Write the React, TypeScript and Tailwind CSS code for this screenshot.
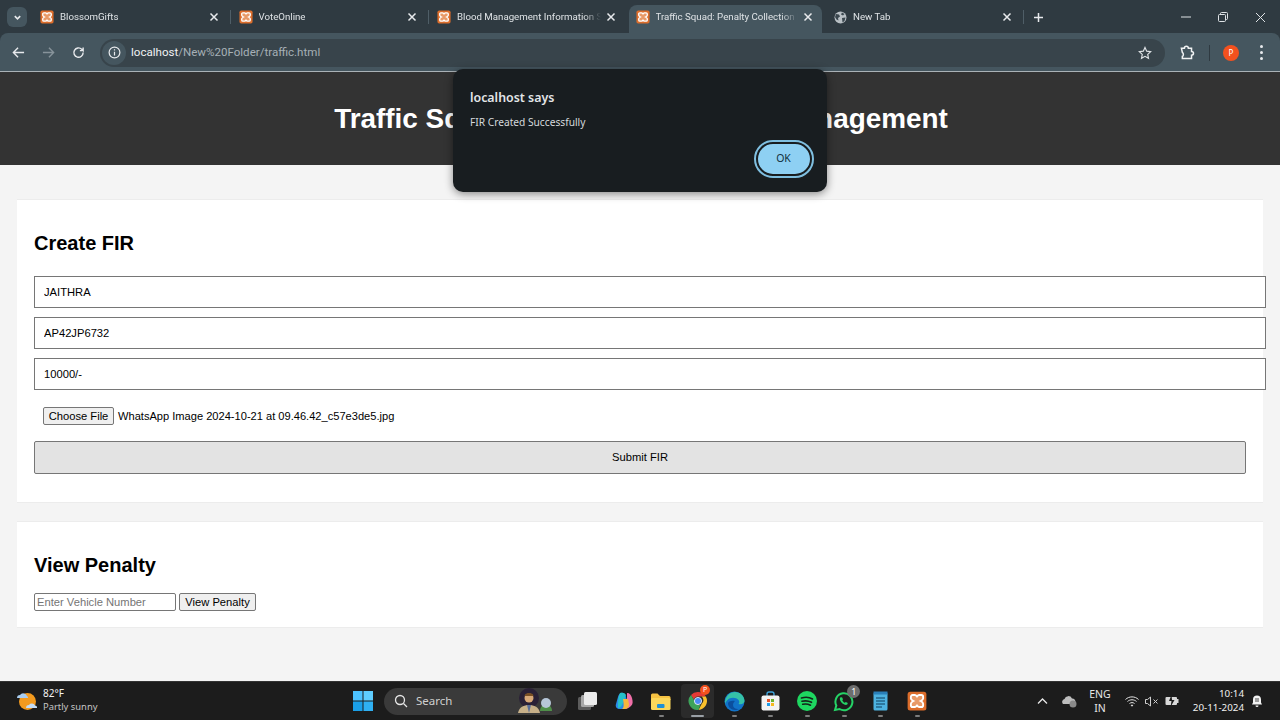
import { ReactNode } from "react"

function XamppIcon({ size = 14 }: { size?: number }) {
  return (
    <svg width={size} height={size} viewBox="0 0 16 16" className="shrink-0">
      <rect x="0.5" y="0.5" width="15" height="15" rx="2" fill="#dc6d2b" />
      <path
        d="M4.5 3.2h1.8c.8 0 1.2.5 1.7 1.2.5-.7.9-1.2 1.7-1.2h1.8c.9 0 1.4.7 1.4 1.5v1.2c0 .9-.8 1.5-2 2.1 1.2.6 2 1.2 2 2.1v1.2c0 .8-.5 1.5-1.4 1.5H9.7c-.8 0-1.2-.5-1.7-1.2-.5.7-.9 1.2-1.7 1.2H4.500c-.9 0-1.400-.7-1.400-1.500v-1.200c0-.9.800-1.500 2-2.100-1.200-.6-2-1.200-2-2.100V4.700c0-.8.500-1.500 1.400-1.500z"
        fill="#e89a68"
        stroke="#fff"
        strokeWidth="1.5"
      />
    </svg>
  )
}

function CloseIcon() {
  return (
    <svg width="10" height="10" viewBox="0 0 10 10" className="shrink-0" stroke="#e8eaed" strokeWidth="1.5" fill="none">
      <path d="M1.500 1.500l7 7M8.500 1.500l-7 7" />
    </svg>
  )
}

function GlobeIcon() {
  return (
    <svg width="13" height="13" viewBox="0 0 13 13" className="shrink-0">
      <circle cx="6.5" cy="6.5" r="6" fill="#b9c0c5" />
      <path d="M2 3l3 .5 1 2-2 1.500.5 2.500L2.500 8.500 1 6zM8 1.500l2.500 1.500-1.500 1.500-2-1zM8 7l3.500-.5-1 3.500-2 1.500z" fill="#3b474f" />
    </svg>
  )
}

function TabTitle({ title }: { title: string }) {
  return (
    <span className="ml-[6px] pt-px flex-1 min-w-0 overflow-hidden whitespace-nowrap text-[9.7px] text-[#dfe3e6] font-['Roboto',sans-serif] [mask-image:linear-gradient(to_right,black_88%,transparent)]">
      {title}
    </span>
  )
}

function Tab({ title, separator }: { title: string; separator?: boolean }) {
  return (
    <div className="flex items-center w-[198.5px] h-[28px] pl-[8px]">
      <XamppIcon />
      <TabTitle title={title} />
      <span className="ml-[5px] mr-[11px]">
        <CloseIcon />
      </span>
      <span className={separator ? "w-px h-[14px] bg-[#4f5e67]" : "w-px h-[14px]"} />
    </div>
  )
}

function TaskIcon({ children, dash, active }: { children: ReactNode; dash?: boolean; active?: boolean }) {
  return (
    <div
      className={
        active
          ? "relative flex items-center justify-center w-[33px] h-[34px] mx-[1.8px] rounded-[4px] bg-[#2b2b2b]"
          : "relative flex items-center justify-center w-[36.6px] h-[34px]"
      }
    >
      {children}
      {dash && (
        <span
          className={
            active
              ? "absolute bottom-[1px] left-[10px] w-[13px] h-[2px] rounded-full bg-[#9aa0a6]"
              : "absolute bottom-[1px] left-[16px] w-[5px] h-[2px] rounded-full bg-[#7d7d7d]"
          }
        />
      )}
    </div>
  )
}

const inputClass =
  "block box-content w-full h-[30px] px-[9px] mb-[9px] border border-[#767676] bg-white text-[11.2px] text-black font-['Liberation_Sans',sans-serif] leading-[30px]"

export default function App() {
  return (
    <div className="relative flex flex-col w-[1280px] h-[720px] overflow-hidden bg-[#f4f4f4] font-['Liberation_Sans',sans-serif]">
      <div className="shrink-0 bg-[#2f3a41]">
        {/* Browser tab strip */}
        <div className="flex items-start h-[33px]">
          <div className="flex items-center justify-center w-[20px] h-[20px] mt-[7px] ml-[7px] mr-[5px] rounded-[6px] bg-[#45565f]">
            <svg width="9" height="9" viewBox="0 0 10 10" fill="none" stroke="#e8eaed" strokeWidth="1.8">
              <path d="M2 3.500l3 3 3-3" />
            </svg>
          </div>
          <div className="flex items-start pt-[3px]">
            <Tab title="BlossomGifts" separator />
            <Tab title="VoteOnline" separator />
            <Tab title="Blood Management Information System" />
          </div>
          <div className="flex items-center w-[193px] h-[28px] mt-[5px] ml-[1.5px] pl-[6.5px] pr-[9px] pb-[4px] rounded-t-[8px] bg-[#45565f]">
            <XamppIcon />
            <TabTitle title="Traffic Squad: Penalty Collection Management" />
            <span className="ml-[5px]">
              <CloseIcon />
            </span>
          </div>
          <div className="flex items-center w-[202px] h-[28px] mt-[3px] pl-[12px]">
            <GlobeIcon />
            <TabTitle title="New Tab" />
            <span className="mr-[11px]">
              <CloseIcon />
            </span>
            <span className="w-px h-[14px] bg-[#4f5e67]" />
          </div>
          <div className="flex items-center h-[28px] mt-[3px] ml-[9px]">
            <svg width="11" height="11" viewBox="0 0 11 11" stroke="#e8eaed" strokeWidth="1.5">
              <path d="M5.500 1v9M1 5.500h9" />
            </svg>
          </div>
          <div className="flex-1" />
          <div className="flex items-center h-[28px] mt-[3px] pr-[14px] gap-[27px]">
            <svg width="10" height="10" viewBox="0 0 10 10" stroke="#dfe3e6" strokeWidth="1">
              <path d="M0 5h10" />
            </svg>
            <svg width="10" height="10" viewBox="0 0 10 10" fill="none" stroke="#dfe3e6" strokeWidth="1">
              <rect x="0.5" y="2.5" width="7" height="7" rx="1" />
              <path d="M2.500 2.500V1.500a1 1 0 0 1 1-1h5a1 1 0 0 1 1 1v5a1 1 0 0 1-1 1h-1" />
            </svg>
            <svg width="11" height="11" viewBox="0 0 11 11" stroke="#dfe3e6" strokeWidth="1">
              <path d="M1 1l9 9M10 1l-9 9" />
            </svg>
          </div>
        </div>

        {/* Toolbar */}
        <div className="flex items-center h-[39px] pt-px rounded-t-[8px] bg-[#45565f] border-b border-[#aab2b7]">
          <div className="flex items-center w-[100px] pl-[12px] gap-[17px]">
            <svg width="13" height="13" viewBox="0 0 14 14" fill="none" stroke="#e8eaed" strokeWidth="1.5">
              <path d="M13 7H1.500M6.500 2l-5 5 5 5" />
            </svg>
            <svg width="13" height="13" viewBox="0 0 14 14" fill="none" stroke="#87939a" strokeWidth="1.5">
              <path d="M1 7h11.500M7.500 2l5 5-5 5" />
            </svg>
            <svg width="13" height="13" viewBox="0 0 14 14" fill="none" stroke="#e8eaed" strokeWidth="1.5">
              <path d="M12 7a5 5 0 1 1-1.500-3.500L12 5V1.500M12 5H8.500" />
            </svg>
          </div>
          <div className="flex items-center w-[1065px] h-[28px] rounded-full bg-[#38444b]">
            <span className="flex items-center justify-center w-[24px] h-[24px] ml-[2px] rounded-full bg-[#45565f]">
              <svg width="13" height="13" viewBox="0 0 14 14" fill="none" stroke="#e8eaed" strokeWidth="1.3">
                <circle cx="7" cy="7" r="5.8" />
                <path d="M7 6.200v4M7 3.600v1.300" />
              </svg>
            </span>
            <span className="ml-[5px] pt-px text-[11.55px] text-[#f1f3f4] font-['Roboto',sans-serif]">
              localhost<span className="text-[#a6b0b6]">/New%20Folder/traffic.html</span>
            </span>
            <span className="flex-1" />
            <svg width="14" height="14" viewBox="0 0 24 24" fill="none" stroke="#dfe3e6" strokeWidth="2" className="mr-[13px]">
              <path d="M12 2.500l2.900 6.300 6.800.8-5 4.700 1.300 6.800-6-3.400-6 3.400 1.300-6.800-5-4.700 6.800-.8z" />
            </svg>
          </div>
          <svg width="15" height="15" viewBox="0 0 16 16" fill="none" stroke="#f1f3f4" strokeWidth="1.6" className="ml-[15px]">
            <path d="M1.500 3.500h3.200c0-3 4.200-3 4.200 0h3.400v3.400c2.800 0 2.800 4 0 4v3.600H2.500v-2.300c1.500-.4 1.500-3.700 0-4.200z" />
          </svg>
          <div className="w-px h-[16px] ml-[14px] bg-[#2f3a41]" />
          <div className="flex items-center justify-center w-[16px] h-[16px] ml-[13px] rounded-full bg-[#f4511e] text-[8px] text-white font-['Noto_Sans',sans-serif]">
            P
          </div>
          <div className="flex flex-col gap-[3px] ml-[21px]">
            <span className="w-[3px] h-[3px] rounded-full bg-[#e8eaed]" />
            <span className="w-[3px] h-[3px] rounded-full bg-[#e8eaed]" />
            <span className="w-[3px] h-[3px] rounded-full bg-[#e8eaed]" />
          </div>
        </div>
      </div>

      {/* Page */}
      <div className="flex-1 min-h-0">
        <header className="flex items-center justify-center h-[93px] pt-px pl-[2px] bg-[#333333]">
          <h1 className="text-[27.9px] font-bold text-white">Traffic Squad: Penalty Collection Management</h1>
        </header>

        <main className="px-[17px] pt-[34px]">
          <section className="h-[304px] px-[17px] bg-white border-y border-[#ececec]">
            <h2 className="pt-[30px] h-[76px] text-[20px] leading-[26px] font-bold text-black">Create FIR</h2>
            <input readOnly value="JAITHRA" className={inputClass} />
            <input readOnly value="AP42JP6732" className={inputClass} />
            <input readOnly value="10000/-" className={inputClass} />
            <div className="flex items-center h-[18px] mt-[17px] ml-[9px]">
              <button className="h-[18px] w-[71px] border border-[#767676] rounded-[2px] bg-[#efefef] text-[11.2px] text-black">
                Choose File
              </button>
              <span className="ml-[4px] text-[11.1px] text-black">WhatsApp Image 2024-10-21 at 09.46.42_c57e3de5.jpg</span>
            </div>
            <button className="block w-full h-[33px] mt-[16px] border border-[#767676] rounded-[2px] bg-[#e3e3e3] text-[11.2px] text-black">
              Submit FIR
            </button>
          </section>

          <section className="h-[107px] mt-[18px] px-[17px] bg-white border-y border-[#ececec]">
            <h2 className="pt-[30px] h-[72px] text-[20px] leading-[26px] font-bold text-black">View Penalty</h2>
            <div className="flex items-center gap-[3px] mt-[-1px]">
              <input
                readOnly
                placeholder="Enter Vehicle Number"
                className="w-[142px] h-[18px] px-[2px] border border-[#767676] rounded-[2px] bg-white text-[11.2px] text-black placeholder:text-[#757575]"
              />
              <button className="w-[77px] h-[18px] border border-[#767676] rounded-[2px] bg-[#efefef] text-[11.2px] text-black">
                View Penalty
              </button>
            </div>
          </section>
        </main>
      </div>

      {/* Taskbar */}
      <div className="flex items-center h-[39px] shrink-0 bg-[#1c1c1c] border-t border-[#333333] text-white font-['Noto_Sans',sans-serif]">
        <div className="flex items-center w-[345px] pl-[16px] shrink-0">
          <svg width="22" height="22" viewBox="0 0 22 22">
            <circle cx="11.5" cy="11.5" r="8.5" fill="#f39a1e" />
            <path d="M1 8a3 3 0 0 1 3-3 4 4 0 0 1 7 1 2 2 0 0 1 1 2z" fill="#a9cdf0" />
            <path d="M10 18a3 3 0 0 1 3-3 3.500 3.500 0 0 1 6 .5 2 2 0 0 1 2 2.500z" fill="#c4dcf5" />
          </svg>
          <div className="ml-[5px] flex flex-col mt-[-2px]">
            <span className="text-[10px] leading-[13px] text-[#f2f2f2]">82°F</span>
            <span className="text-[9.4px] leading-[14px] text-[#c4c4c4]">Partly sunny</span>
          </div>
        </div>

        <div className="flex items-center w-[36px] justify-center shrink-0">
          <svg width="20" height="20" viewBox="0 0 20 20">
            <rect x="0" y="0" width="9.5" height="9.5" fill="#4cc2ff" />
            <rect x="10.5" y="0" width="9.5" height="9.5" fill="#5fcdff" />
            <rect x="0" y="10.5" width="9.5" height="9.5" fill="#1a9fe8" />
            <rect x="10.5" y="10.5" width="9.5" height="9.5" fill="#2fb0f2" />
          </svg>
        </div>

        <div className="flex items-center w-[183px] h-[27px] ml-[3px] pl-[10px] rounded-full bg-[#3a3a3a] shrink-0">
          <svg width="14" height="14" viewBox="0 0 14 14" fill="none" stroke="#e6e6e6" strokeWidth="1.3">
            <circle cx="6" cy="6" r="4.5" />
            <path d="M9.500 9.500L13 13" />
          </svg>
          <span className="ml-[8px] flex-1 text-[11.5px] text-[#cfcfcf]">Search</span>
          <svg width="42" height="26" viewBox="0 0 42 26" className="mr-[-2px]">
            <circle cx="14" cy="10" r="10" fill="#2a2036" />
            <path d="M3 25c1-6 6-8 11-8s10 2 11 8z" fill="#c7b089" />
            <path d="M12 17l2 8 2-8z" fill="#5a6d99" />
            <circle cx="14" cy="10" r="4.5" fill="#d9a878" />
            <path d="M9.500 8c0-4 9-4 9 0z" fill="#7a4f24" />
            <path d="M25 23c0-4 3-7 6-7s6 3 6 7z" fill="#4f8f4a" />
            <circle cx="31" cy="15" r="5" fill="#b6c6d8" />
          </svg>
          <span className="w-[12px]" />
        </div>

        <div className="flex items-center ml-[2.5px]">
          <TaskIcon>
            <svg width="21" height="20" viewBox="0 0 21 20">
              <rect x="1" y="6" width="13" height="13" rx="1.5" fill="#5c5c5c" />
              <rect x="4" y="4" width="13" height="12" rx="1.5" fill="#a8a8a8" />
              <rect x="7" y="1" width="13" height="13" rx="1.5" fill="#ececec" />
            </svg>
          </TaskIcon>
          <TaskIcon>
            <svg width="20" height="20" viewBox="0 0 20 20">
              <path d="M7 2c3-1 4 1 5 4l2 7c1 3-1 5-4 5H6C3 18 1 16 2 13l2-7c.5-2 1.500-3.500 3-4z" fill="#2a8be8" />
              <path d="M13 2c3 0 4 2 5 5 1 4 1 6-1 8-2 2-4 3-6 3l2-6z" fill="#f06fa8" />
              <path d="M6 2c3-.5 5 0 6 2L9 12c-1 3-3 5-5 5 0-4 0-11 2-15z" fill="#27c1c9" />
              <path d="M9 8h5l1 5c.5 3-2 5-5 5H8c2-1 2-4 1-10z" fill="#f6b73c" />
            </svg>
          </TaskIcon>
          <TaskIcon dash>
            <svg width="21" height="19" viewBox="0 0 21 19">
              <path d="M1 3a1.500 1.500 0 0 1 1.500-1.500h5L10 4h9a1.500 1.500 0 0 1 1.500 1.500V8H1z" fill="#f5c242" />
              <rect x="1" y="6" width="19.5" height="12" rx="1.5" fill="#fbd75b" />
              <rect x="7" y="12" width="7.5" height="4" rx="1" fill="#1f8fd6" />
            </svg>
          </TaskIcon>
          <TaskIcon dash active>
            <svg width="20" height="20" viewBox="0 0 20 20">
              <path d="M10 1a9 9 0 0 1 7.800 4.500H10a4.500 4.500 0 0 0-4.200 3L3 3.900A9 9 0 0 1 10 1z" fill="#e53935" />
              <path d="M17.800 5.500A9 9 0 0 1 10.500 19l3.400-6.500a4.500 4.500 0 0 0-.3-7z" fill="#f9c02d" />
              <path d="M3 3.900l3.900 6.700a4.500 4.500 0 0 0 5.500 3.200L10.500 19A9 9 0 0 1 3 3.900z" fill="#3da35a" />
              <circle cx="10" cy="10" r="3.6" fill="#4c8bf5" stroke="#fff" strokeWidth="0.8" />
            </svg>
            <span className="absolute top-[1px] right-[4px] flex items-center justify-center w-[10px] h-[10px] rounded-full bg-[#f4511e] text-[7px] text-white">
              P
            </span>
          </TaskIcon>
          <TaskIcon dash>
            <svg width="21" height="21" viewBox="0 0 21 21">
              <circle cx="10.5" cy="10.5" r="10" fill="#1173c9" />
              <path d="M1 11C1.500 5 6 1 11 1c5 0 9 3.500 9.500 8.500.2 3-3 4.500-6 3.500 1-1 1-3 0-4C12 6 6 6 3.500 9 2.500 10 1.500 11 1 13z" fill="#35c1a7" />
              <path d="M4 12c0 4 3 7 7 7 1.500 0 3-.5 4-1-3 .5-6-1-6-4 0-2 1-3 2-4-3-.5-6 0-7 2z" fill="#0b4f9e" />
            </svg>
          </TaskIcon>
          <TaskIcon dash>
            <svg width="19" height="20" viewBox="0 0 19 20">
              <path d="M6 5V3a2 2 0 0 1 2-2h3a2 2 0 0 1 2 2v2" fill="none" stroke="#3fa7e0" strokeWidth="1.3" />
              <rect x="0.5" y="4.5" width="18" height="15" rx="2" fill="#f3f3f3" />
              <rect x="6" y="8" width="3" height="3" fill="#e8542a" />
              <rect x="10" y="8" width="3" height="3" fill="#6ab42e" />
              <rect x="6" y="12" width="3" height="3" fill="#1e9ce8" />
              <rect x="10" y="12" width="3" height="3" fill="#f5b91e" />
            </svg>
          </TaskIcon>
          <TaskIcon dash>
            <svg width="20" height="20" viewBox="0 0 20 20" fill="none">
              <circle cx="10" cy="10" r="10" fill="#1ed760" />
              <path d="M4.500 7c3.500-1 8-.8 11 1M5 10.300c3-.8 6.500-.5 9.500 1M5.700 13.300c2.500-.6 5.300-.4 7.800.9" stroke="#14241a" strokeWidth="1.6" strokeLinecap="round" />
            </svg>
          </TaskIcon>
          <TaskIcon dash>
            <svg width="21" height="21" viewBox="0 0 21 21" fill="none">
              <path d="M2 19l1.300-4.500A8.500 8.500 0 1 1 6.500 18z" stroke="#25d366" strokeWidth="2" />
              <path d="M7 6.500c-.8 2 .8 4.500 2.500 6 1.800 1.400 3.500 1.800 4.800 1l.5-1.500-2-1-1 .8c-1-.4-2-1.400-2.500-2.600l.7-1-1-2z" fill="#25d366" />
            </svg>
            <span className="absolute top-[1px] right-[2px] flex items-center justify-center w-[13px] h-[13px] rounded-full bg-[#6e6e6e] text-[9px] text-white">
              1
            </span>
          </TaskIcon>
          <TaskIcon dash>
            <svg width="15" height="20" viewBox="0 0 15 20">
              <rect x="0.5" y="1.5" width="14" height="18" rx="1.5" fill="#4db2e0" />
              <rect x="0.5" y="0.5" width="14" height="3" fill="#2a7fb8" />
              <path d="M3 7h9M3 10h9M3 13h9M3 16h6" stroke="#0f3f5f" strokeWidth="1" />
            </svg>
          </TaskIcon>
          <TaskIcon dash>
            <XamppIcon size={20} />
          </TaskIcon>
        </div>

        <div className="flex-1" />

        <div className="flex items-center pr-[17px]">
          <svg width="11" height="8" viewBox="0 0 11 8" fill="none" stroke="#e6e6e6" strokeWidth="1.3" className="mr-[14px]">
            <path d="M1 6.500l4.500-4.500 4.500 4.500" />
          </svg>
          <svg width="15" height="13" viewBox="0 0 15 13" className="mr-[10.5px]">
            <path d="M1 9a3 3 0 0 1 1.500-5 4 4 0 0 1 7.500-.5A3 3 0 0 1 12 9z" fill="#bdbdbd" />
            <circle cx="11" cy="9" r="3.5" fill="#8a8a8a" />
          </svg>
          <div className="flex flex-col items-center w-[26px] mr-[12px] text-[10.5px] leading-[14px] text-[#e6e6e6]">
            <span>ENG</span>
            <span>IN</span>
          </div>
          <svg width="14" height="11" viewBox="0 0 14 11" fill="none" stroke="#e6e6e6" strokeWidth="1" className="mr-[6px]">
            <path d="M.5 3.500c3.500-3.500 9.500-3.500 13 0M2.500 5.500c2.500-2.300 6.500-2.300 9 0M4.500 7.500c1.500-1.200 3.500-1.200 5 0" />
            <circle cx="7" cy="9.5" r="0.6" fill="#e6e6e6" />
          </svg>
          <svg width="14" height="11" viewBox="0 0 14 11" fill="none" stroke="#d0d0d0" strokeWidth="1" className="mr-[6px]">
            <path d="M.5 3.500h2l3-2.500v9l-3-2.500h-2zM8.500 3.500l4 4M12.500 3.500l-4 4" />
          </svg>
          <svg width="14" height="12" viewBox="0 0 14 12" className="mr-[13px]">
            <rect x="0.5" y="2" width="11.5" height="8" rx="1" fill="#d8d8d8" />
            <rect x="12" y="4" width="1.5" height="4" fill="#d8d8d8" />
            <path d="M6.500 0L4 6h2.500L5.500 12 9.500 5H7z" fill="#1c1c1c" />
          </svg>
          <div className="flex flex-col items-end w-[52px] whitespace-nowrap text-[9.8px] leading-[14px] text-[#f2f2f2]">
            <span>10:14</span>
            <span>20-11-2024</span>
          </div>
          <svg width="12" height="14" viewBox="0 0 12 14" className="ml-[7px]">
            <path d="M6 1.500c-2.500 0-4 1.500-4 4v3L1 10.500h10L10 8.500v-3c0-2.500-1.500-4-4-4z" fill="#f2f2f2" />
            <path d="M4.500 11.500a1.500 1.500 0 0 0 3 0z" fill="#f2f2f2" />
            <path d="M4 5h4M4 7h4" stroke="#1c1c1c" strokeWidth="0.8" />
          </svg>
        </div>
      </div>

      {/* Alert dialog */}
      <div className="absolute left-[453px] top-[69px] w-[374px] h-[123px] pl-[17px] pr-[15.5px] pt-[20px] rounded-[10px] bg-[#181d20] shadow-[0_2px_8px_rgba(0,0,0,0.45)] font-['Noto_Sans',sans-serif] z-20">
        <p className="text-[12.4px] leading-[18px] font-semibold text-[#e3e6e8]">localhost says</p>
        <p className="mt-[7.5px] text-[10.2px] leading-[14px] text-[#d5d9dc]">FIR Created Successfully</p>
        <div className="flex justify-end mt-[13px]">
          <button className="w-[56px] h-[34px] rounded-full bg-[#8ed0f3] border-[2px] border-[#181d20] outline-[2px] outline-solid outline-[#7fbfe0] text-[10.5px] text-[#123040]">
            OK
          </button>
        </div>
      </div>
    </div>
  )
}
